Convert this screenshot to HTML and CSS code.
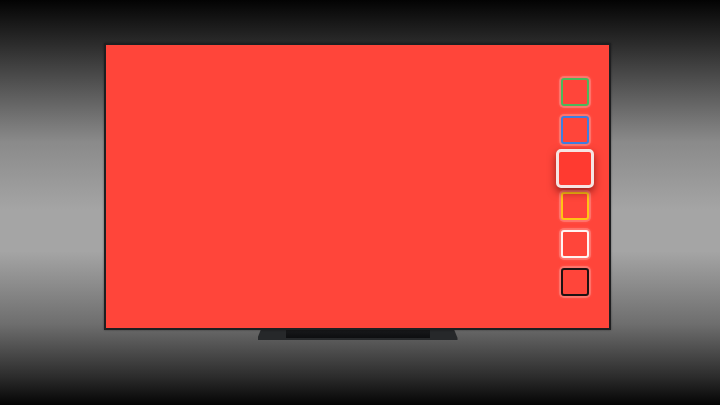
FILE: index.html
```html
<!DOCTYPE html>
<html>
<head>
<meta charset="utf-8">
<link rel="stylesheet" href="styles.css">
</head>
<body>
<div class="stage">
  <div class="tv">
    <div class="screen">
      <div class="swatches">
        <div class="slot"><div class="swatch green"></div></div>
        <div class="slot"><div class="swatch blue"></div></div>
        <div class="slot"><div class="swatch selected"></div></div>
        <div class="slot"><div class="swatch yellow"></div></div>
        <div class="slot"><div class="swatch white"></div></div>
        <div class="slot"><div class="swatch black"></div></div>
      </div>
    </div>
  </div>
  <div class="stand"><div class="stand-inner"></div></div>
</div>
</body>
</html>
```
FILE: styles.css
```css
html, body {
  margin: 0;
  padding: 0;
}
body {
  width: 720px;
  height: 405px;
  overflow: hidden;
  background: linear-gradient(to bottom, #030303 0%, #2c2c2c 11%, #8a8a8a 35%, #a5a5a5 52%, #a5a5a5 62%, #6e6e6e 80%, #2c2c2c 93%, #040404 100%);
}
.stage {
  display: flex;
  flex-direction: column;
  align-items: center;
  padding-top: 43px;
  width: 715px;
}
.tv {
  width: 507px;
  height: 287px;
  box-sizing: border-box;
  border: 2px solid #1e1f21;
  background: #ff453a;
  box-shadow: 0 0 2px rgba(0,0,0,0.4);
  position: relative;
  z-index: 1;
}
.screen {
  width: 100%;
  height: 100%;
  background: #ff453a;
  display: flex;
  justify-content: flex-end;
  align-items: flex-start;
  box-sizing: border-box;
  padding: 28px 15px 0 0;
}
.swatches {
  display: flex;
  flex-direction: column;
}
.slot {
  width: 38px;
  height: 38px;
  display: flex;
  align-items: center;
  justify-content: center;
}
.swatch {
  width: 28px;
  height: 28px;
  box-sizing: border-box;
  border: 2px solid #fff;
  border-radius: 3px;
  background: #ff453a;
  box-shadow: 0 0 0 2px rgba(255,255,255,0.18), 0 0 3px 2px rgba(255,255,255,0.12);
}
.green { border-color: #4cb85a; }
.blue { border-color: #3d7ee0; }
.yellow { border-color: #ffc414; }
.white { border-color: #fff4f2; }
.black { border-color: #1d1212; }
.selected {
  width: 39px;
  height: 39px;
  border: 3px solid #f6e4e2;
  border-radius: 5px;
  background: #ff3a30;
  box-shadow: 0 4px 9px rgba(60,0,0,0.55);
  position: relative;
  z-index: 2;
}
.stand {
  width: 200px;
  height: 12px;
  margin-top: -2px;
  background: #26282a;
  clip-path: polygon(4px 0, 196px 0, 200px 10px, 200px 12px, 0 12px, 0 10px);
  display: flex;
  justify-content: center;
}
.stand-inner {
  width: 144px;
  height: 10px;
  background: linear-gradient(to bottom, #1a1b1d, #0d0e10);
}
```
